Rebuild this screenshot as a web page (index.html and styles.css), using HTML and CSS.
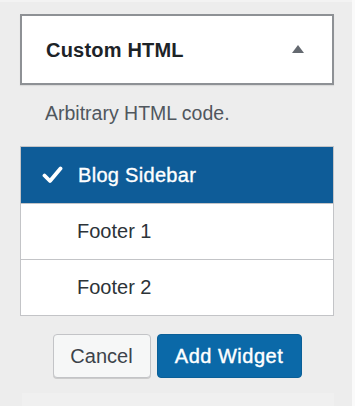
FILE: index.html
```html
<!DOCTYPE html>
<html>
<head>
<meta charset="utf-8">
<link rel="stylesheet" href="styles.css">
</head>
<body>
<div class="panel">
  <div class="widget-head">
    <span class="widget-title">Custom HTML</span>
    <svg class="caret" width="12" height="8" viewBox="0 0 12 8"><polygon points="6,0 12,8 0,8" fill="#646970"/></svg>
  </div>
  <p class="desc">Arbitrary HTML code.</p>
  <ul class="areas">
    <li class="area selected">
      <svg class="check" width="21" height="18" viewBox="0 0 21 18"><path d="M2.5 9.5 L8 15 L18.5 2.5" fill="none" stroke="#fff" stroke-width="3.8" stroke-linecap="round" stroke-linejoin="round"/></svg>
      <span>Blog Sidebar</span>
    </li>
    <li class="area"><span>Footer 1</span></li>
    <li class="area"><span>Footer 2</span></li>
  </ul>
  <div class="actions">
    <button class="btn btn-cancel">Cancel</button>
    <button class="btn btn-primary">Add Widget</button>
  </div>
  <div class="next-widget"></div>
</div>
</body>
</html>
```
FILE: styles.css
```css
html, body {
  margin: 0;
  padding: 0;
  background: #fafafa;
}
body {
  font-family: "Liberation Sans", Arial, sans-serif;
  width: 355px;
  height: 406px;
  overflow: hidden;
}
.panel {
  width: 352px;
  height: 406px;
  box-sizing: border-box;
  background: #ededed;
  padding: 14px 0 0 20px;
  border-top: 2px solid #f3f3f3;
}
.widget-head {
  width: 314px;
  height: 71px;
  box-sizing: border-box;
  margin-top: -2px;
  background: #fff;
  border: 2px solid #8e9195;
  box-shadow: 0 1px 1px rgba(0,0,0,0.08);
  display: flex;
  align-items: center;
  justify-content: space-between;
  padding: 0 28px 0 24px;
}
.widget-title {
  font-size: 20px;
  font-weight: bold;
  color: #1d2327;
  letter-spacing: 0.2px;
  margin-top: 2px;
}
.caret {
  display: block;
  margin-top: -2px;
}
.desc {
  margin: 16px 0 0 0;
  padding-left: 25px;
  font-size: 19.5px;
  line-height: 24px;
  color: #50575e;
}
.areas {
  list-style: none;
  margin: 21px 0 0 0;
  padding: 0;
  width: 314px;
  box-sizing: border-box;
  border: 1px solid #c3c4c7;
  background: #fff;
}
.area {
  height: 56px;
  display: flex;
  align-items: center;
  padding-left: 56px;
  font-size: 20px;
  color: #2c3338;
  border-top: 1px solid #c3c4c7;
  box-sizing: border-box;
}
.area:first-child {
  border-top: none;
}
.area.selected {
  background: #0e5c98;
  color: #fff;
  padding-left: 21px;
  letter-spacing: 0.3px;
  -webkit-text-stroke: 0.35px #fff;
}
.check {
  display: block;
  margin-right: 15px;
}
.actions {
  display: flex;
  justify-content: center;
  gap: 6px;
  width: 314px;
  margin-top: 18px;
}
.btn {
  height: 44px;
  box-sizing: border-box;
  border-radius: 4px;
  font-family: "Liberation Sans", Arial, sans-serif;
  font-size: 20px;
  padding: 0;
  cursor: pointer;
}
.btn-cancel {
  width: 98px;
  background: #f6f7f7;
  border: 1px solid #c3c4c7;
  color: #3c434a;
  box-shadow: 0 1px 0 #ccc;
}
.btn-primary {
  width: 145px;
  background: #0b69a8;
  border: 1px solid #0a5f97;
  color: #fff;
  letter-spacing: 0.5px;
  -webkit-text-stroke: 0.4px #fff;
}
.next-widget {
  width: 312px;
  height: 20px;
  margin: 15px 0 0 2px;
  background: #f0f0f0;
}
```
